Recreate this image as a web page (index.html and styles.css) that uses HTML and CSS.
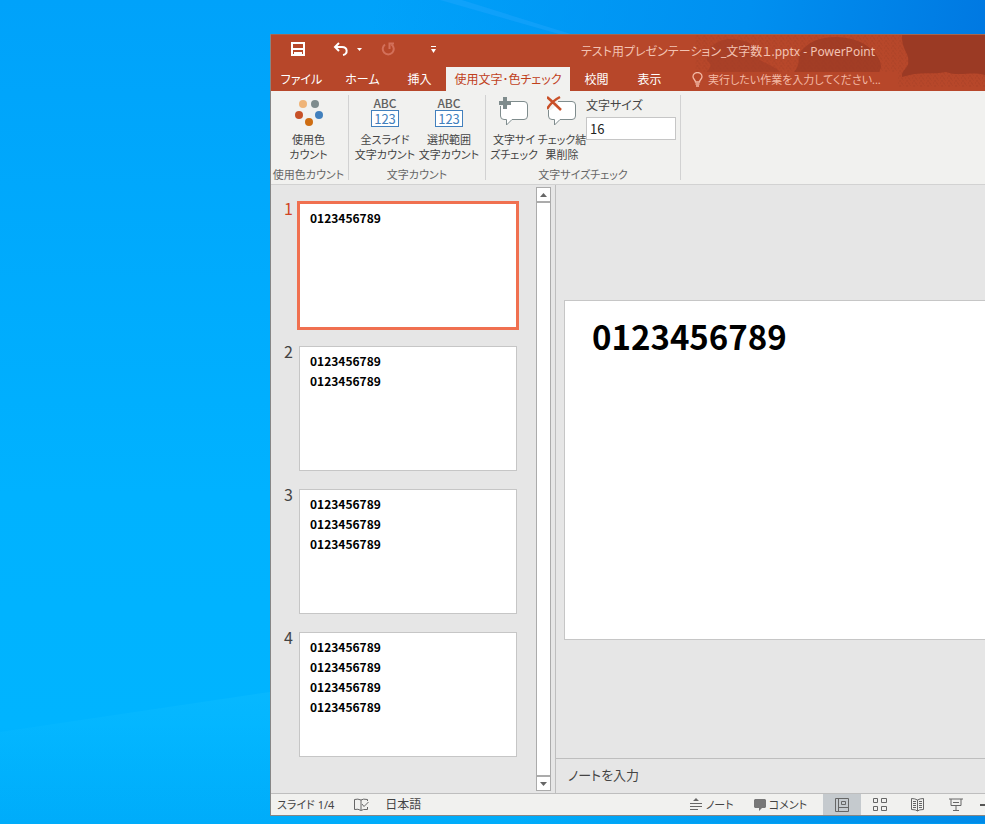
FILE: index.html
```html
<!DOCTYPE html>
<html lang="ja">
<head>
<meta charset="utf-8">
<meta name="viewport" content="width=device-width, initial-scale=1">
<title>テスト用プレゼンテーション_文字数１.pptx - PowerPoint</title>
<link rel="stylesheet" href="styles.css">
</head>
<body>
<svg class="wallpaper" viewBox="0 0 985 824" preserveAspectRatio="none" aria-hidden="true">
  <defs>
    <linearGradient id="ray" x1="0" y1="0" x2="0" y2="1"><stop offset="0" stop-color="#14c0ff" stop-opacity=".35"/><stop offset="1" stop-color="#00b4ff" stop-opacity="0"/></linearGradient>
  </defs>
  <path d="M0 732 L270 692 V824 H0Z" fill="url(#ray)"/>
  <path d="M440 0 L580 40 L590 40 L462 0Z" fill="#2aa8ff" opacity=".35"/>
</svg>
<main class="window">
  <header class="header">
    <svg class="header-art" viewBox="0 0 715 57" preserveAspectRatio="xMinYMin slice" aria-hidden="true">
      <defs>
        <pattern id="grain" width="7" height="5" patternUnits="userSpaceOnUse"><path d="M0 1h1M3 0h1M5 3h1M2 4h1M6 1h1M1 3h1" stroke="#9c3b24" opacity=".5"/></pattern>
      </defs>
      <path d="M425 0H715V52H627V37H425Z" fill="url(#grain)"/>
      <path d="M436 37Q444 30 437 26C434 12 450 3 462 4C480 5 490 14 489 25Q505 32 510 37Z" fill="#a03c26" opacity=".6"/>
      <path d="M524 37Q530 30 528 20C536 7 550 2 566 2C590 2 610 16 611 32L609 37Z" fill="#9b3a24" opacity=".75"/>
      <path d="M632 0H715V40C700 36 690 42 676 37C662 40 650 36 632 42C630 36 640 32 638 26C640 20 631 14 632 0Z" fill="#9b3a24"/>
    </svg>
    <div class="titlebar">
      <div class="quick">
        <button class="qbtn save" aria-label="上書き保存"><svg width="14" height="14" viewBox="0 0 14 14"><path d="M1 1h12v12H1zM1 7h12" fill="none" stroke="#fff" stroke-width="2"/><path d="M3 10h8v4H8v-2H6v2H3z" fill="#fff"/></svg></button>
        <button class="qbtn undo" aria-label="元に戻す"><svg width="16" height="14" viewBox="0 0 16 14"><path d="M6 1L2 5l4 4M2 5h7c6 0 6 7 1 8" fill="none" stroke="#fff" stroke-width="2"/></svg></button>
        <button class="qbtn drop" aria-label="元に戻す操作の一覧"><svg width="5" height="3" viewBox="0 0 5 3"><path d="M0 0h5L2.500 3z" fill="#fff"/></svg></button>
        <button class="qbtn redo" aria-label="繰り返し" disabled><svg width="14" height="14" viewBox="0 0 14 14"><path d="M4 2.500a5.500 5.500 0 1 0 6.500 0M8.500 7V1.500H13" fill="none" stroke="#d3705a" stroke-width="2"/></svg></button>
        <button class="qbtn more" aria-label="クイック アクセス ツール バーのユーザー設定"><svg width="5" height="7" viewBox="0 0 5 7"><path d="M0 0h5v1H0zM0 3h5L2.500 7z" fill="#fff"/></svg></button>
      </div>
      <h1 class="title">テスト用プレゼンテーション_文字数１.pptx - PowerPoint</h1>
    </div>
    <nav class="tabs">
      <button class="tab file">ファイル</button>
      <button class="tab home">ホーム</button>
      <button class="tab">挿入</button>
      <button class="tab active">使用文字･色チェック</button>
      <button class="tab">校閲</button>
      <button class="tab">表示</button>
      <label class="tell">
        <svg width="11" height="15" viewBox="0 0 11 15" aria-hidden="true"><path d="M3.500 10C3.500 8 1 7 1 4.800a4.500 4.300 0 0 1 9 0C10 7 7.500 8 7.500 10zM3.500 12h4M4 14h3" fill="none" stroke="#f3b9a5" stroke-width="1.300"/></svg>
        <input class="tell-input" type="text" aria-label="操作アシスト" placeholder="実行したい作業を入力してください...">
      </label>
    </nav>
  </header>

  <section class="ribbon">
    <div class="group colors">
      <div class="tools">
        <button class="tool"><svg class="icon" width="30" height="32" viewBox="0 0 30 32" aria-hidden="true"><circle cx="9" cy="9" r="4" fill="#efb478"/><circle cx="21" cy="9" r="4" fill="#7f8c8d"/><circle cx="5" cy="20" r="4" fill="#c75127"/><circle cx="25" cy="20" r="4" fill="#4280bd"/><circle cx="15" cy="27" r="4" fill="#ce6d12"/></svg>使用色<br>カウント</button>
      </div>
      <p class="caption">使用色カウント</p>
    </div>
    <div class="group counts">
      <div class="tools">
        <button class="tool wide"><span class="icon count"><b>ABC</b><i>123</i></span>全スライド<br>文字カウント</button>
        <button class="tool wide"><span class="icon count"><b>ABC</b><i>123</i></span>選択範囲<br>文字カウント</button>
      </div>
      <p class="caption">文字カウント</p>
    </div>
    <div class="group sizes">
      <div class="tools">
        <button class="tool mid"><svg class="icon" width="30" height="32" viewBox="0 -1 30 32" aria-hidden="true"><path d="M5 5.500h20q3.500 0 3.500 3.500v11q0 3.500-3.500 3.500H13L7.500 29v-5.500H5q-3.500 0-3.500-3.500V9q0-3.500 3.500-3.500z" fill="#fff" stroke="#7f8c8d"/><path d="M0 4h9v6H0z" fill="#f1f1ef"/><path d="M4 1h4v4h4v4H8v4H4V9H0V5h4z" fill="#7f8c8d"/></svg>文字サイ<br>ズチェック</button>
        <button class="tool mid"><svg class="icon" width="30" height="32" viewBox="0 -1 30 32" aria-hidden="true"><path d="M5 5.500h20q3.500 0 3.500 3.500v11q0 3.500-3.500 3.500H13L7.500 29v-5.500H5q-3.500 0-3.500-3.500V9q0-3.500 3.500-3.500z" fill="#fff" stroke="#7f8c8d"/><path d="M0 0h11v8L4 14H0z" fill="#f1f1ef"/><path d="M0 1q6 5 14 13M13 1Q5 5 0 13" fill="none" stroke="#c94f27" stroke-width="2.500"/></svg>チェック結<br>果削除</button>
        <label class="size">文字サイズ<input class="size-input" type="text" value="16"></label>
      </div>
      <p class="caption">文字サイズチェック</p>
    </div>
  </section>

  <section class="body">
    <ol class="thumbs">
      <li class="row selected"><span class="num">1</span><div class="thumb">0123456789</div></li>
      <li class="row"><span class="num">2</span><div class="thumb">0123456789<br>0123456789</div></li>
      <li class="row"><span class="num">3</span><div class="thumb">0123456789<br>0123456789<br>0123456789</div></li>
      <li class="row"><span class="num">4</span><div class="thumb">0123456789<br>0123456789<br>0123456789<br>0123456789</div></li>
    </ol>
    <div class="scroll">
      <button class="arrow" aria-label="上へスクロール"><svg width="7" height="4" viewBox="0 0 7 4"><path d="M0 4h7L3.500 0z" fill="#666"/></svg></button>
      <div class="track"></div>
      <button class="arrow" aria-label="下へスクロール"><svg width="7" height="4" viewBox="0 0 7 4"><path d="M0 0h7L3.500 4z" fill="#666"/></svg></button>
    </div>
    <div class="editor">
      <div class="canvas"><article class="slide">0123456789</article></div>
      <div class="notes">ノートを入力</div>
    </div>
  </section>

  <footer class="status">
    <span>スライド 1/4</span>
    <button class="sbtn proof" aria-label="スペル チェック"><svg width="15" height="14" viewBox="0 0 15 14"><path d="M7 12V2Q4 .5.500 1.500v10Q4 10.500 7 12.500Q9 11 13.500 11.500V9M7 2Q9 .5 13.500 1.500V3M8 6l2 2.500L14.500 4" fill="none" stroke="#666"/></svg></button>
    <button class="sbtn lang">日本語</button>
    <div class="views">
      <button class="sbtn note"><svg width="12" height="13" viewBox="0 0 12 13" aria-hidden="true"><path d="M6 0l3 3H3zM0 5h12v1H0zM0 8h12v1H0zM0 11h8v1H0z" fill="#666"/></svg>ノート</button>
      <button class="sbtn comment"><svg width="12" height="12" viewBox="0 0 12 12" aria-hidden="true"><path d="M1 0h10l1 1v7l-1 1H8l-3 3V9H1L0 8V1z" fill="#777"/></svg>コメント</button>
      <button class="view on" aria-label="標準"><svg width="14" height="14" viewBox="0 0 14 14"><path d="M.5.500h13v13H.5zM3.500.500v13M3.500 9.500h10M6.500 3.500h4v3h-4z" fill="none" stroke="#666"/></svg></button>
      <button class="view" aria-label="スライド一覧"><svg width="14" height="14" viewBox="0 0 14 14"><path d="M.5.500h4v4h-4zM8.500.500h5v4h-5zM.5 8.500h4v4h-4zM8.500 8.500h5v4h-5z" fill="none" stroke="#666"/></svg></button>
      <button class="view" aria-label="閲覧表示"><svg width="14" height="14" viewBox="0 0 14 14"><path d="M6.500 13V2Q4 .5.500.500v11Q5 11.500 6.500 13Q8 11.500 12.500 11.500V.500Q9 .5 6.500 2M2 3.500h3M2 5.500h3M2 7.500h3M2 9.500h3M8 3.500h3M8 5.500h3M8 7.500h3M8 9.500h3" fill="none" stroke="#666"/></svg></button>
      <button class="view" aria-label="スライド ショー"><svg width="14" height="13" viewBox="0 0 14 13"><path d="M0 1h14M2 1v6.500h10V1M7 8v4M4 12.500h6M4 4.500h6" fill="none" stroke="#666"/></svg></button>
      <button class="zoom-out" aria-label="縮小"><svg width="10" height="2" viewBox="0 0 10 2"><path d="M0 0h10v2H0z" fill="#555"/></svg></button>
    </div>
  </footer>
</main>
</body>
</html>
```
FILE: styles.css
```css
* { box-sizing: border-box; }

body {
  margin: 0;
  min-height: 100vh;
  padding: 34px 0 8px 270px;
  display: flex;
  overflow: hidden;
  font-family: "Noto Sans", "Noto Sans CJK JP", sans-serif;
  font-size: 12px;
  line-height: 15px;
  font-feature-settings: "palt";
  color: #444;
  background:
    linear-gradient(100deg, transparent 35%, #0090f0 70%, #0076e0 95%) top / 100% 60% no-repeat,
    linear-gradient(100deg, transparent 55%, #008ae8 100%) bottom / 100% 40% no-repeat,
    linear-gradient(#00a2fa, #00b2ff 60%, #00b4ff 88%, #00acfa);
}

button, input {
  margin: 0;
  padding: 0;
  border: 0;
  background: none;
  color: inherit;
  font: inherit;
  font-feature-settings: inherit;
}

svg { display: block; flex: none; }
p, h1, ol { margin: 0; padding: 0; }

.wallpaper {
  position: absolute;
  inset: 0;
  z-index: -1;
  width: 100%;
  height: 100%;
}

.window {
  flex: 1;
  min-width: 0;
  display: flex;
  flex-direction: column;
  overflow: hidden;
  background: #e6e6e6;
  border-left: 1px solid #868686;
  border-bottom: 1px solid #868686;
}

.header { position: relative; background: #b7472a; color: #fff; border-top: 1px solid #a5654f; }
.header-art { position: absolute; inset: 0; width: 100%; height: 100%; }
.titlebar, .tabs { position: relative; display: flex; }
.titlebar { height: 32px; }
.quick { display: flex; align-items: center; width: 200px; padding: 0 35px 4px 20px; }
.qbtn { display: flex; }
.undo { margin-left: 28px; }
.drop { margin-left: 8px; }
.redo { margin-left: 19px; }
.more { margin-left: auto; }
.title {
  flex: 1;
  min-width: 0;
  font-size: 12px;
  font-weight: 400;
  line-height: 34px;
  text-align: center;
  white-space: nowrap;
  color: #f3c3b3;
}
.tabs { height: 24px; }
.tab { min-width: 53px; white-space: nowrap; }
.tab.file, .tab.home { min-width: 61px; }
.tab.active { min-width: 124px; background: #f1f1ef; color: #c0401c; }
.tell { display: flex; flex: 1; align-items: center; gap: 5px; margin-left: 16px; color: #f3b9a5; font-size: 11px; }
.tell-input { flex: 1; min-width: 0; }
.tell-input::placeholder { color: #f3b9a5; opacity: 1; }

.ribbon { display: flex; height: 94px; padding: 4px 0; background: #f1f1ef; border-bottom: 1px solid #d2d2d2; }
.group { display: flex; flex-direction: column; border-right: 1px solid #d2d2d2; white-space: nowrap; }
.colors { width: 78px; padding-right: 2px; }
.counts { width: 137px; }
.sizes { width: 195px; }
.tools { display: flex; flex: 1; justify-content: center; }
.tool { display: flex; flex-direction: column; align-items: center; text-align: center; font-size: 11px; }
.wide { width: 64px; }
.mid { width: 48px; }
.icon { height: 32px; margin-bottom: 5px; }
.count { width: 28px; font-family: "Noto Sans CJK JP", sans-serif; line-height: 15px; }
.count b { display: block; font-size: 12px; font-weight: 500; color: #606060; }
.count i { display: block; border: 1px solid #4280bd; background: #fff; color: #4280bd; font-style: normal; font-size: 13px; }
.sizes .tools { padding-left: 4px; }
.size { flex: 1; display: flex; flex-direction: column; gap: 4px; padding: 3px 4px 0 0; }
.size-input { width: 100%; height: 23px; padding: 0 3px; border: 1px solid #c6c6c6; background: #fff; color: #222; font-family: "Noto Sans CJK JP", sans-serif; font-size: 13px; }
.caption { text-align: center; color: #666; font-size: 11px; line-height: 10px; }

.body { flex: 1; min-height: 0; display: flex; }
.thumbs { width: 265px; padding: 18px 0 0 13px; list-style: none; display: flex; flex-direction: column; gap: 18px; }
.row { display: flex; gap: 6px; }
.num { width: 9px; font-family: "Noto Sans CJK JP", sans-serif; font-size: 16px; line-height: 10px; }
.selected .num { color: #d04423; }
.thumb, .slide {
  border: 1px solid #c6c6c6;
  background: #fff;
  color: #000;
  font-family: "Noto Sans CJK JP", sans-serif;
  font-weight: 700;
}
.thumb {
  width: 218px;
  height: 125px;
  padding: 4px 10px;
  font-size: 12px;
  line-height: 20px;
}
.selected .thumb { border-color: #f07050; outline: 2px solid #f07050; }

.scroll { width: 15px; margin: 2px 4px 2px 0; display: flex; flex-direction: column; }
.arrow { display: flex; align-items: center; justify-content: center; height: 15px; border: 1px solid #ababab; background: #fff; }
.track { flex: 1; border: 1px solid #ababab; background: #fff; }

.editor { flex: 1; min-width: 0; display: flex; flex-direction: column; border-left: 1px solid #bebebe; }
.canvas { flex: 1; display: flex; align-items: center; padding: 0 0 4px 8px; overflow: hidden; }
.slide {
  flex: none;
  height: 340px;
  aspect-ratio: 16 / 9;
  padding: 11px 27px;
  font-size: 33px;
  line-height: 48px;
}
.notes { height: 35px; padding: 0 12px; border-top: 1px solid #bebebe; font-size: 13px; line-height: 33px; }

.status { display: flex; align-items: center; height: 22px; padding-left: 6px; border-top: 1px solid #bebebe; background: #f1f1ef; font-size: 11px; white-space: nowrap; }
.sbtn, .view { display: flex; align-items: center; }
.proof { margin: 0 16px 0 20px; }
.lang { font-size: 12px; }
.views { display: flex; align-self: stretch; margin-left: auto; }
.note { gap: 4px; margin-right: 20px; }
.comment { gap: 3px; margin-right: 16px; }
.view { justify-content: center; width: 38px; }
.on { background: #c5cace; }
.zoom-out { width: 10px; overflow: hidden; padding-left: 5px; }
```
